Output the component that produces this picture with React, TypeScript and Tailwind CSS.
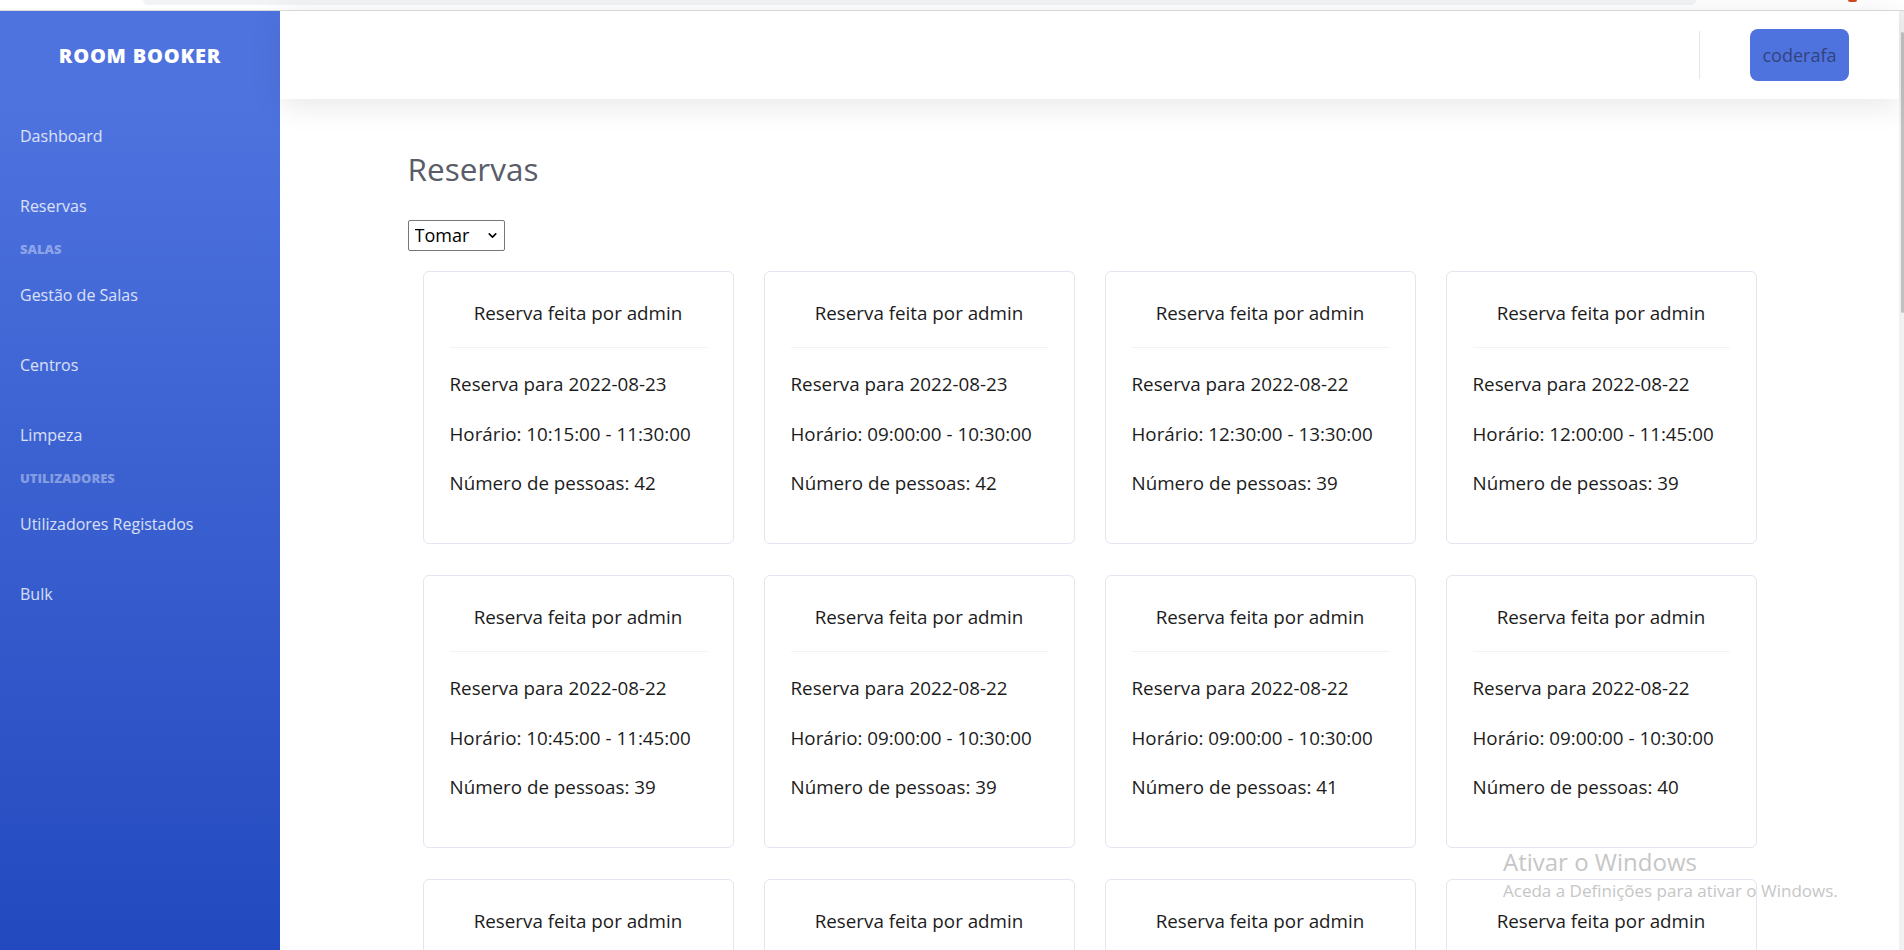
import { ChevronDown } from 'lucide-react';

type Reserva = { date: string; start: string; end: string; people: number };

const reservas: Reserva[] = [
  { date: '2022-08-23', start: '10:15:00', end: '11:30:00', people: 42 },
  { date: '2022-08-23', start: '09:00:00', end: '10:30:00', people: 42 },
  { date: '2022-08-22', start: '12:30:00', end: '13:30:00', people: 39 },
  { date: '2022-08-22', start: '12:00:00', end: '11:45:00', people: 39 },
  { date: '2022-08-22', start: '10:45:00', end: '11:45:00', people: 39 },
  { date: '2022-08-22', start: '09:00:00', end: '10:30:00', people: 39 },
  { date: '2022-08-22', start: '09:00:00', end: '10:30:00', people: 41 },
  { date: '2022-08-22', start: '09:00:00', end: '10:30:00', people: 40 },
  { date: '2022-08-21', start: '14:00:00', end: '15:00:00', people: 38 },
  { date: '2022-08-21', start: '11:00:00', end: '12:30:00', people: 40 },
  { date: '2022-08-21', start: '09:30:00', end: '10:30:00', people: 42 },
  { date: '2022-08-21', start: '09:00:00', end: '10:00:00', people: 37 },
];

function NavItem({ label }: { label: string }) {
  return (
    <a href="#" className="flex h-[70px] items-center px-[20px] text-[16px] text-white/80">
      {label}
    </a>
  );
}

function NavHeading({ label }: { label: string }) {
  return (
    <div className="h-[19px] px-[20px] text-[13px] font-extrabold uppercase leading-[16px] text-white/40">
      {label}
    </div>
  );
}

function ReservaCard({ r }: { r: Reserva }) {
  return (
    <div className="rounded-[6px] border border-[#e3e6f0] bg-white px-[26px] pt-[27px] pb-[46px] text-[18.8px] text-[#1b1b1b]">
      <div className="border-b border-[#f1f2f6] pb-[20px] text-center leading-[28px]">Reserva feita por admin</div>
      <div className="mt-[22px] flex flex-col gap-[21.5px] leading-[28px]">
        <p>Reserva para {r.date}</p>
        <p>
          Horário: {r.start} - {r.end}
        </p>
        <p>Número de pessoas: {r.people}</p>
      </div>
    </div>
  );
}

export default function App() {
  return (
    <div className="relative flex h-[950px] flex-col overflow-hidden bg-white font-['Open_Sans',sans-serif]">
      {/* browser chrome strip */}
      <div className="flex h-[11px] shrink-0 border-b border-[#dadce0]">
        <div className="ml-[143px] h-[5px] w-[1553px] rounded-b-[8px] bg-[#f1f3f4]" />
        <div className="ml-[152px] h-[2px] w-[9px] rounded-b-full bg-[#d4481e]" />
      </div>

      <div className="flex min-h-0 flex-1">
        {/* ===== SIDEBAR ===== */}
        <aside className="w-[280px] shrink-0 bg-linear-to-b from-[#4e73df] from-10% to-[#2349bf] text-white">
          <div className="flex h-[90px] items-center justify-center text-[20px] font-extrabold uppercase tracking-[0.8px]">
            Room Booker
          </div>
          <NavItem label="Dashboard" />
          <NavItem label="Reservas" />
          <NavHeading label="Salas" />
          <NavItem label="Gestão de Salas" />
          <NavItem label="Centros" />
          <NavItem label="Limpeza" />
          <NavHeading label="Utilizadores" />
          <NavItem label="Utilizadores Registados" />
          <NavItem label="Bulk" />
        </aside>

        {/* ===== MAIN ===== */}
        <div className="flex min-w-0 flex-1 flex-col">
          <header className="relative z-10 flex h-[88px] shrink-0 items-center justify-end bg-white pr-[50px] shadow-[0_6px_28px_rgba(58,59,69,0.12)]">
            <div className="h-[48px] w-px bg-[#e3e6f0]" />
            <button className="ml-[50px] h-[52px] w-[99px] rounded-[8px] bg-[#4e73df] text-[18px] text-[#33437e]">
              coderafa
            </button>
          </header>

          <main className="mx-auto w-[1364px]">
            <h1 className="mt-[52px] text-[31.5px] leading-[36px] text-[#5a5c69]">Reservas</h1>
            <div className="relative mt-[33px] w-[97px]">
              <select className="h-[31px] w-[97px] appearance-none rounded-[2px] border border-[#767676] bg-white pl-[6px] text-[18px] text-black">
                <option>Tomar</option>
              </select>
              <ChevronDown className="pointer-events-none absolute top-[9px] right-[6px] h-[13px] w-[13px] text-black" strokeWidth={3} />
            </div>
            <div className="mt-[20px] grid grid-cols-4 gap-x-[30px] gap-y-[31px] px-[15px]">
              {reservas.map((r, i) => (
                <ReservaCard key={i} r={r} />
              ))}
            </div>
          </main>
        </div>

        {/* scrollbar */}
        <div className="w-[5px] shrink-0 bg-[#f1f1f1] pt-[21px]">
          <div className="ml-[2px] h-[281px] w-[3px] rounded-full bg-[#c1c1c1]" />
        </div>
      </div>

      {/* windows activation watermark */}
      <div className="pointer-events-none absolute top-[846px] left-[1503px] text-[#c6c6c6]">
        <div className="text-[24px] leading-[32px]">Ativar o Windows</div>
        <div className="mt-[2px] text-[17px] leading-[22px]">Aceda a Definições para ativar o Windows.</div>
      </div>
    </div>
  );
}
